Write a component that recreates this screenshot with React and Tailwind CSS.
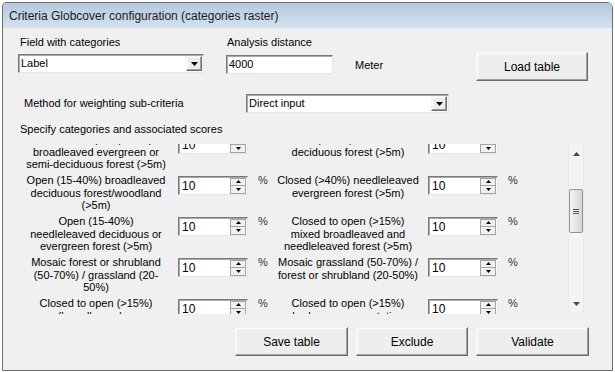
import React from 'react'

const FONT = { fontFamily: '"Liberation Sans", Arial, sans-serif' }

const rows = [
  [['Closed to open (>15%)', 'broadleaved evergreen or', 'semi-deciduous forest (>5m)'], ['Closed (>40%) broadleaved', 'deciduous forest (>5m)']],
  [['Open (15-40%) broadleaved', 'deciduous forest/woodland', '(>5m)'], ['Closed (>40%) needleleaved', 'evergreen forest (>5m)']],
  [['Open (15-40%)', 'needleleaved deciduous or', 'evergreen forest (>5m)'], ['Closed to open (>15%)', 'mixed broadleaved and', 'needleleaved forest (>5m)']],
  [['Mosaic forest or shrubland', '(50-70%) / grassland (20-', '50%)'], ['Mosaic grassland (50-70%) /', 'forest or shrubland (20-50%)']],
  [['Closed to open (>15%)', '(broadleaved or', 'needleleaved, evergreen or'], ['Closed to open (>15%)', 'herbaceous vegetation', '(grassland, savannas or']],
]

function Tri({ up, w = 7, h = 4, color = '#000' }) {
  return (
    <svg width={w} height={h} viewBox={`0 0 ${w} ${h}`}>
      <polygon points={up ? `0,${h} ${w},${h} ${w / 2},0` : `0,0 ${w},0 ${w / 2},${h}`} fill={color} />
    </svg>
  )
}

const sunken = 'border border-t-[#7a7a7a] border-l-[#7a7a7a] border-r-[#e6e6e6] border-b-[#e6e6e6] shadow-[inset_1px_1px_0_#a8a8a8] bg-white'
const raised = 'border border-t-[#f4f4f4] border-l-[#f4f4f4] border-r-[#6b6b6b] border-b-[#6b6b6b] shadow-[inset_-1px_-1px_0_#a0a0a0,inset_1px_1px_0_#ffffff] bg-[#ececec]'

function Combo({ text, w }) {
  return (
    <div className={`${sunken} ${w} h-[19px] flex items-center`}>
      <span className="flex-1 pl-[2px] text-[11px] leading-[13px]">{text}</span>
      <div className={`${raised} w-[16px] h-[15px] mr-[1px] flex items-center justify-center`}>
        <Tri />
      </div>
    </div>
  )
}

function Spin() {
  return (
    <div className={`${sunken} w-[70px] h-[19px] flex items-center`}>
      <span className="flex-1 pl-[3px] text-[12px] leading-[14px] pt-[1px]">10</span>
      <div className="w-[16px] h-[16px] mr-[1px] flex flex-col">
        <div className="flex-1 border border-[#a3a3a3] bg-[#f0f0f0] flex items-center justify-center">
          <Tri up w={5} h={3} />
        </div>
        <div className="flex-1 border border-t-0 border-[#a3a3a3] bg-[#f0f0f0] flex items-center justify-center">
          <Tri w={5} h={3} />
        </div>
      </div>
    </div>
  )
}

function Button({ label, w }) {
  return (
    <div className={`${raised} ${w} h-[29px] flex items-center justify-center text-[12px] bg-[#eeeeee]`}>
      {label}
    </div>
  )
}

function Label({ lines, w }) {
  return (
    <div className={`${w} text-center text-[11px] leading-[12.5px] -mt-[2px]`}>
      {lines.map((l, i) => <div key={i} className="whitespace-nowrap">{l}</div>)}
    </div>
  )
}

export default function App() {
  return (
    <div className="w-[615px] h-[372px] bg-white pl-[2px] pt-[2px] text-black" style={FONT}>
      <div className="w-[611px] h-[369px] border border-[#6f6f6f] rounded-tl-[4px] rounded-tr-[6px] bg-[#f0f0f0] flex flex-col overflow-hidden">
        <div className="h-[25px] shrink-0 bg-gradient-to-b from-[#b5c8dd] to-[#d4e2f0] pl-[6px] flex items-center text-[12px] text-[#1a1a1a]">
          Criteria Globcover configuration (categories raster)
        </div>

        <div className="flex items-start pt-[8px] pl-[15px]">
          <div className="flex flex-col w-[186px]">
            <div className="pl-[2px] text-[11px] leading-[13px] h-[13px]">Field with categories</div>
            <div className="mt-[5px]"><Combo text="Label" w="w-[186px]" /></div>
          </div>
          <div className="flex flex-col ml-[22px]">
            <div className="pl-[1px] text-[11px] leading-[13px] h-[13px]">Analysis distance</div>
            <div className={`${sunken} mt-[6px] w-[107px] h-[19px] flex items-center pl-[2px] text-[11px]`}>4000</div>
          </div>
          <div className="ml-[22px] w-[121px] mt-[23px] text-[11px] leading-[13px]">Meter</div>
          <div className="mt-[16px]"><Button label="Load table" w="w-[112px]" /></div>
        </div>

        <div className="flex items-center mt-[13px] pl-[21px]">
          <div className="w-[222px] text-[11px] leading-[13px]">Method for weighting sub-criteria</div>
          <Combo text="Direct input" w="w-[203px]" />
        </div>

        <div className="mt-[10px] pl-[17px] text-[11px] leading-[13px]">Specify categories and associated scores</div>

        <div className="mt-[8px] pl-[17px] flex h-[170px]">
          <div className="w-[548px] h-[170px] overflow-hidden">
            <div className="-mt-[9px]">
              {rows.map(([a, b], i) => (
                <div key={i} className="h-[41px] flex items-start">
                  <div className="w-[250px] flex items-start">
                    <Label lines={a} w="w-[152px]" />
                    <div className="ml-[6px]"><Spin /></div>
                    <div className="ml-[10px] -mt-[2px] text-[11px] leading-[13px] text-[#333]">%</div>
                  </div>
                  <div className="flex items-start">
                    <Label lines={b} w="w-[156px]" />
                    <div className="ml-[2px]"><Spin /></div>
                    <div className="ml-[10px] -mt-[2px] text-[11px] leading-[13px] text-[#333]">%</div>
                  </div>
                </div>
              ))}
            </div>
          </div>
          <div className="w-[16px] mt-[1px] h-[167px] bg-[#f4f4f4] border-x border-[#e9e9e9] flex flex-col">
            <div className="h-[17px] flex items-center justify-center"><Tri up color="#4a4a4a" /></div>
            <div className="h-[27px]" />
            <div className="h-[44px] rounded-[2px] border border-[#939393] bg-gradient-to-r from-[#f4f4f4] to-[#d6d6d6] flex flex-col items-center justify-center gap-[1px]">
              <div className="w-[6px] h-[1px] bg-[#5a5a5a]" />
              <div className="w-[6px] h-[1px] bg-[#5a5a5a]" />
              <div className="w-[6px] h-[1px] bg-[#5a5a5a]" />
            </div>
            <div className="flex-1" />
            <div className="h-[17px] flex items-center justify-center"><Tri color="#4a4a4a" /></div>
          </div>
        </div>

        <div className="mt-[13px] flex justify-end gap-[8px] pr-[23px]">
          <Button label="Save table" w="w-[113px]" />
          <Button label="Exclude" w="w-[112px]" />
          <Button label="Validate" w="w-[113px]" />
        </div>
      </div>
    </div>
  )
}
